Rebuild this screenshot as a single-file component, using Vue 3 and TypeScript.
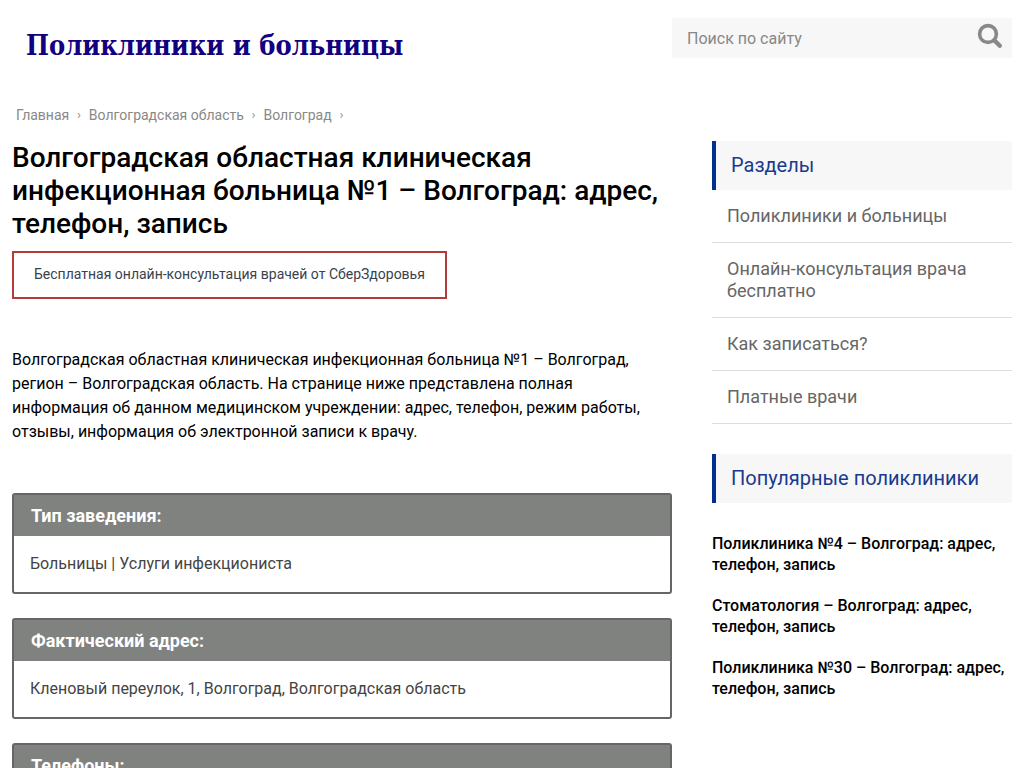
<script setup lang="ts">
import { ref } from 'vue'

interface InfoCard {
  title: string
  text: string
}

const query = ref<string>('')

const crumbs: string[] = ['Главная', 'Волгоградская область', 'Волгоград']

const sections: string[] = [
  'Поликлиники и больницы',
  'Онлайн-консультация врача бесплатно',
  'Как записаться?',
  'Платные врачи',
]

const popular: string[] = [
  'Поликлиника №4 – Волгоград: адрес, телефон, запись',
  'Стоматология – Волгоград: адрес, телефон, запись',
  'Поликлиника №30 – Волгоград: адрес, телефон, запись',
]

const cards: InfoCard[] = [
  { title: 'Тип заведения:', text: 'Больницы | Услуги инфекциониста' },
  { title: 'Фактический адрес:', text: 'Кленовый переулок, 1, Волгоград, Волгоградская область' },
  { title: 'Телефоны:', text: '' },
]
</script>

<template>
  <div class="page">
    <header class="header">
      <a class="logo" href="#">Поликлиники и больницы</a>
      <form class="search" role="search" @submit.prevent>
        <input v-model="query" class="search-input" type="text" placeholder="Поиск по сайту" aria-label="Поиск по сайту" />
        <button class="search-button" type="submit" aria-label="Найти">
          <svg width="26" height="26" viewBox="0 0 26 26" fill="none" stroke="#888" aria-hidden="true">
            <circle cx="11" cy="11" r="8.4" stroke-width="3.6" />
            <path d="M17.3 17.3 L22.8 22.8" stroke-width="4.4" stroke-linecap="round" />
          </svg>
        </button>
      </form>
    </header>

    <nav class="crumbs" aria-label="Навигация">
      <template v-for="crumb in crumbs" :key="crumb">
        <a class="crumb" href="#">{{ crumb }}</a>
        <span class="crumb-sep">›</span>
      </template>
    </nav>

    <div class="columns">
      <main class="main">
        <h1 class="title">Волгоградская областная клиническая инфекционная больница №1 – Волгоград: адрес, телефон, запись</h1>
        <a class="consult" href="#">Бесплатная онлайн-консультация врачей от СберЗдоровья</a>
        <p class="intro">
          Волгоградская областная клиническая инфекционная больница №1 – Волгоград, регион – Волгоградская область. На
          странице ниже представлена полная информация об данном медицинском учреждении: адрес, телефон, режим работы,
          отзывы, информация об электронной записи к врачу.
        </p>
        <div class="cards">
          <section v-for="card in cards" :key="card.title" class="card">
            <h2 class="card-title">{{ card.title }}</h2>
            <p class="card-text">{{ card.text }}</p>
          </section>
        </div>
      </main>

      <aside class="aside">
        <section>
          <h2 class="aside-title">Разделы</h2>
          <ul class="menu">
            <li v-for="item in sections" :key="item" class="menu-item">
              <a class="menu-link" href="#">{{ item }}</a>
            </li>
          </ul>
        </section>
        <section>
          <h2 class="aside-title">Популярные поликлиники</h2>
          <ul class="popular">
            <li v-for="item in popular" :key="item">
              <a class="popular-link" href="#">{{ item }}</a>
            </li>
          </ul>
        </section>
      </aside>
    </div>
  </div>
</template>

<style>
html {
  scrollbar-width: none;
}

body {
  background: #fff;
}
</style>

<style scoped>
.page {
  box-sizing: border-box;
  max-width: 1190px;
  margin: 0 auto;
  padding: 18px 12px 0;
  font-family: Roboto, "Liberation Sans", sans-serif;
  font-size: 16px;
  color: #000;
}

a {
  color: inherit;
  text-decoration: none;
}

h1,
h2,
p,
ul {
  margin: 0;
  padding: 0;
}

ul {
  list-style: none;
}

.header {
  display: flex;
  justify-content: space-between;
  align-items: flex-start;
}

.logo {
  padding: 11px 14px 0;
  font-family: "DejaVu Serif Condensed", "DejaVu Serif", serif;
  font-weight: 700;
  font-size: 27px;
  line-height: 34px;
  color: #120080;
}

.search {
  display: flex;
  width: 340px;
  height: 40px;
  background: #f7f7f7;
}

.search-input {
  flex: 1;
  min-width: 0;
  padding: 0 15px;
  border: 0;
  background: transparent;
  font: inherit;
  color: #444;
}

.search-input::placeholder {
  color: #888;
  opacity: 1;
}

.search-button {
  display: flex;
  padding: 5px 9px 0;
  border: 0;
  background: transparent;
}

.crumbs {
  display: flex;
  align-items: center;
  gap: 8px;
  margin-top: 43px;
  padding: 0 4px;
  font-size: 14px;
  line-height: 18px;
  color: #888;
}

.crumb-sep {
  font-size: 12px;
}

.columns {
  display: flex;
  align-items: flex-start;
  gap: 40px;
  margin-top: 17px;
}

.main {
  flex: 1;
  min-width: 0;
}

.title {
  font-size: 28px;
  font-weight: 500;
  line-height: 33px;
}

.consult {
  display: inline-block;
  margin-top: 11px;
  padding: 11px 20px 13px;
  border: 2px solid #b23b3b;
  font-size: 14px;
  line-height: 20px;
  color: #3a424d;
}

.intro {
  margin-top: 49px;
  line-height: 24px;
}

.cards {
  display: grid;
  gap: 24px;
  margin-top: 49px;
}

.card {
  border: 2px solid #666;
  border-radius: 3px;
}

.card-title {
  padding: 10px 17px;
  background: #80827f;
  font-size: 18px;
  font-weight: 700;
  line-height: 21px;
  color: #fff;
}

.card-text {
  min-height: 24px;
  padding: 16px;
  line-height: 24px;
  color: #444;
}

.aside {
  display: grid;
  flex: none;
  gap: 30px;
  width: 300px;
}

.aside-title {
  padding: 12px 15px;
  border-left: 4px solid #002f8e;
  background: #f7f7f7;
  font-size: 20px;
  font-weight: 400;
  line-height: 25px;
  color: #1a3a8f;
}

.menu-item {
  border-bottom: 1px solid #ddd;
}

.menu-link {
  display: block;
  padding: 15px;
  font-size: 18px;
  line-height: 22px;
  color: #666;
}

.popular {
  display: grid;
  gap: 20px;
  margin-top: 30px;
}

.popular-link {
  display: block;
  font-weight: 500;
  line-height: 21px;
}
</style>
